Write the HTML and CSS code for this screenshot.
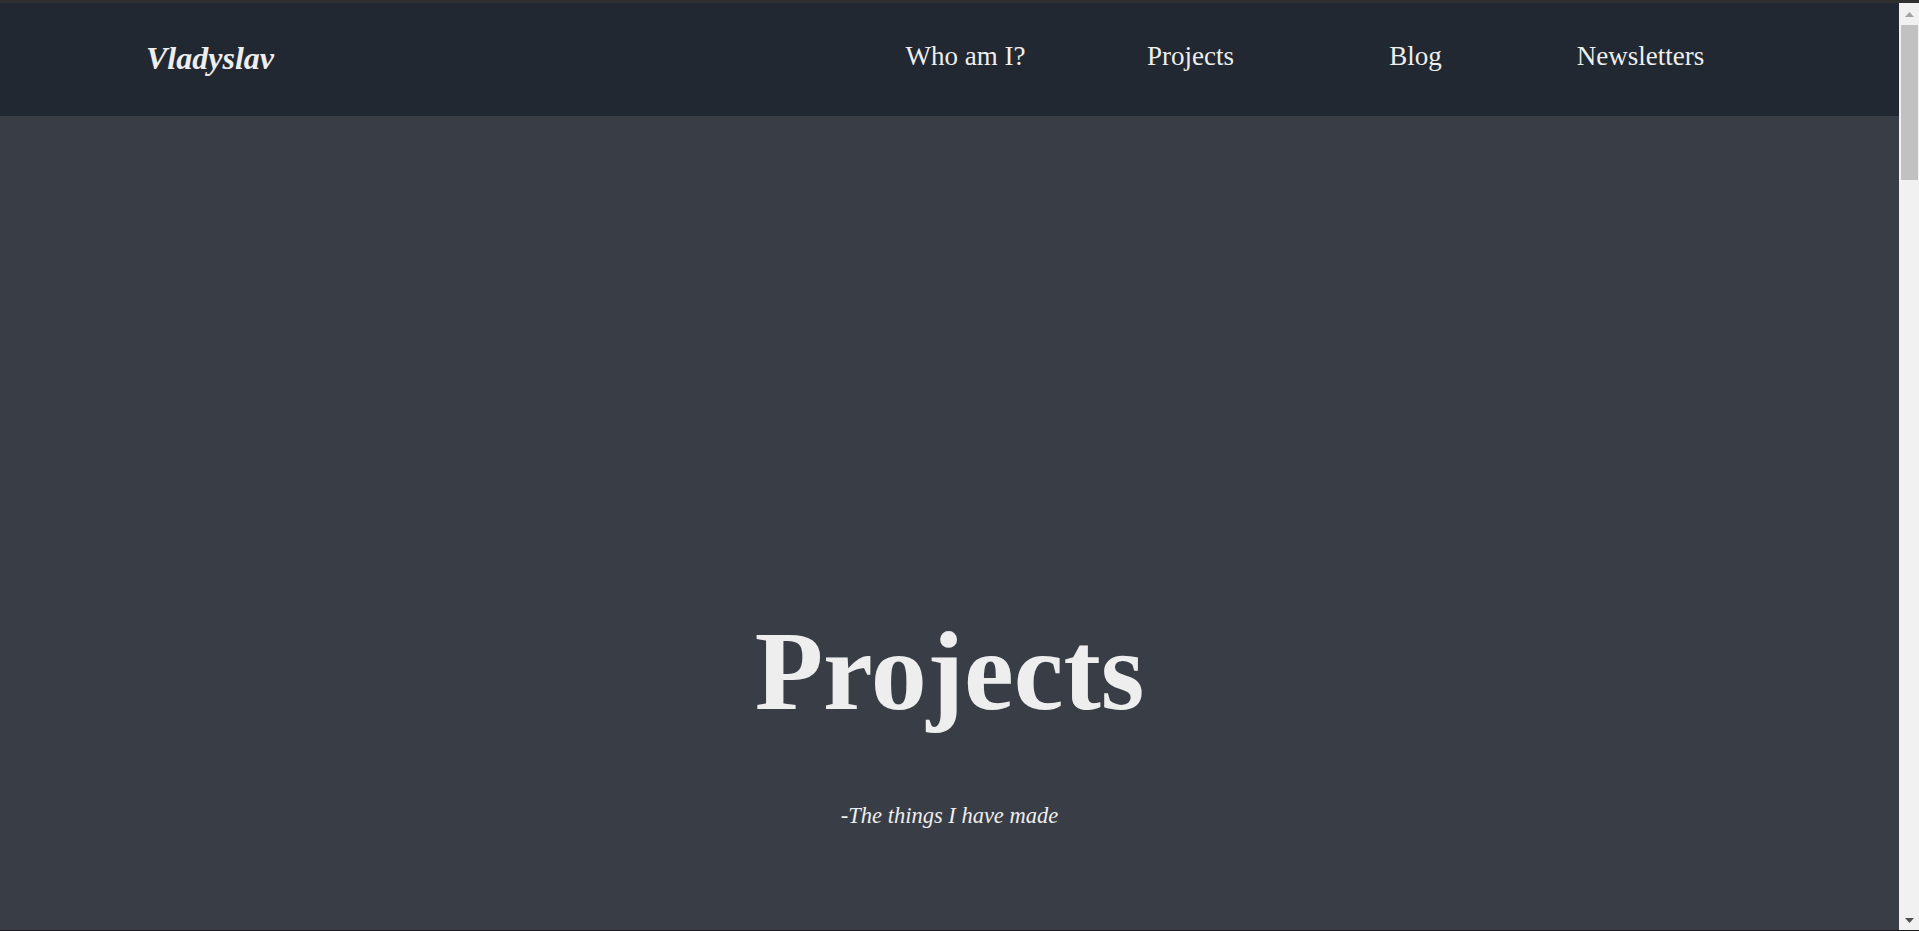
FILE: index.html
```html
<!DOCTYPE html>
<html lang="en">
<head>
<meta charset="utf-8">
<title>Projects - Vladyslav</title>
<link rel="stylesheet" href="styles.css">
</head>
<body>
<div class="frame-top"></div>
<div class="window">
  <div class="page">
    <header class="nav">
      <a class="logo" href="#">Vladyslav</a>
      <ul class="links">
        <li><a href="#">Who am I?</a></li>
        <li><a href="#">Projects</a></li>
        <li><a href="#">Blog</a></li>
        <li><a href="#">Newsletters</a></li>
      </ul>
    </header>
    <section class="hero">
      <h1 class="title">Projects</h1>
      <p class="subtitle">-The things I have made</p>
    </section>
  </div>
  <div class="scrollbar">
    <div class="sb-btn sb-up">
      <svg width="9" height="5" viewBox="0 0 9 5"><polygon points="4.5,0 9,5 0,5" fill="#a3a3a3"/></svg>
    </div>
    <div class="sb-thumb"></div>
    <div class="sb-track"></div>
    <div class="sb-btn sb-down">
      <svg width="9" height="5" viewBox="0 0 9 5"><polygon points="0,0 9,0 4.5,5" fill="#505050"/></svg>
    </div>
  </div>
</div>
<div class="frame-bottom"></div>
</body>
</html>
```
FILE: styles.css
```css
html, body {
  margin: 0;
  padding: 0;
  height: 100%;
  overflow: hidden;
}

body {
  background: #393e46;
  font-family: "Liberation Serif", "Times New Roman", serif;
  color: #eeeeee;
}

.frame-top {
  height: 3px;
  background: #303030;
}

.frame-bottom {
  height: 1px;
  background: #1c1c1c;
}

.window {
  display: flex;
  height: 927px;
}

.page {
  flex: 1;
  display: flex;
  flex-direction: column;
  background: #393e46;
}

.nav {
  height: 113px;
  box-sizing: border-box;
  background: #222831;
  display: flex;
  align-items: flex-start;
  justify-content: space-between;
  padding: 39px 146px 0 146px;
}

.logo {
  font-size: 32px;
  line-height: 32px;
  font-weight: bold;
  font-style: italic;
  color: #eeeeee;
  text-decoration: none;
}

.links {
  list-style: none;
  margin: 1px 0 0 0;
  padding: 0;
  display: flex;
}

.links li {
  width: 225px;
  text-align: center;
}

.links a {
  font-size: 27px;
  line-height: 27px;
  color: #eeeeee;
  text-decoration: none;
}

.hero {
  flex: 1;
  display: flex;
  flex-direction: column;
  align-items: center;
  padding-top: 499px;
}

.title {
  margin: 0;
  font-size: 112px;
  line-height: 112px;
  font-weight: bold;
  color: #eeeeee;
}

.subtitle {
  margin: 78px 0 0 0;
  font-size: 22.5px;
  line-height: 22px;
  font-style: italic;
  color: #eeeeee;
}

.scrollbar {
  width: 20px;
  background: #f1f1f1;
  display: flex;
  flex-direction: column;
}

.sb-btn {
  display: flex;
  justify-content: center;
  align-items: center;
  padding-left: 1px;
}

.sb-up {
  height: 22px;
}

.sb-down {
  height: 19px;
}

.sb-thumb {
  height: 155px;
  margin: 0 1px 0 2px;
  background: #c1c1c1;
}

.sb-track {
  flex: 1;
}
```
